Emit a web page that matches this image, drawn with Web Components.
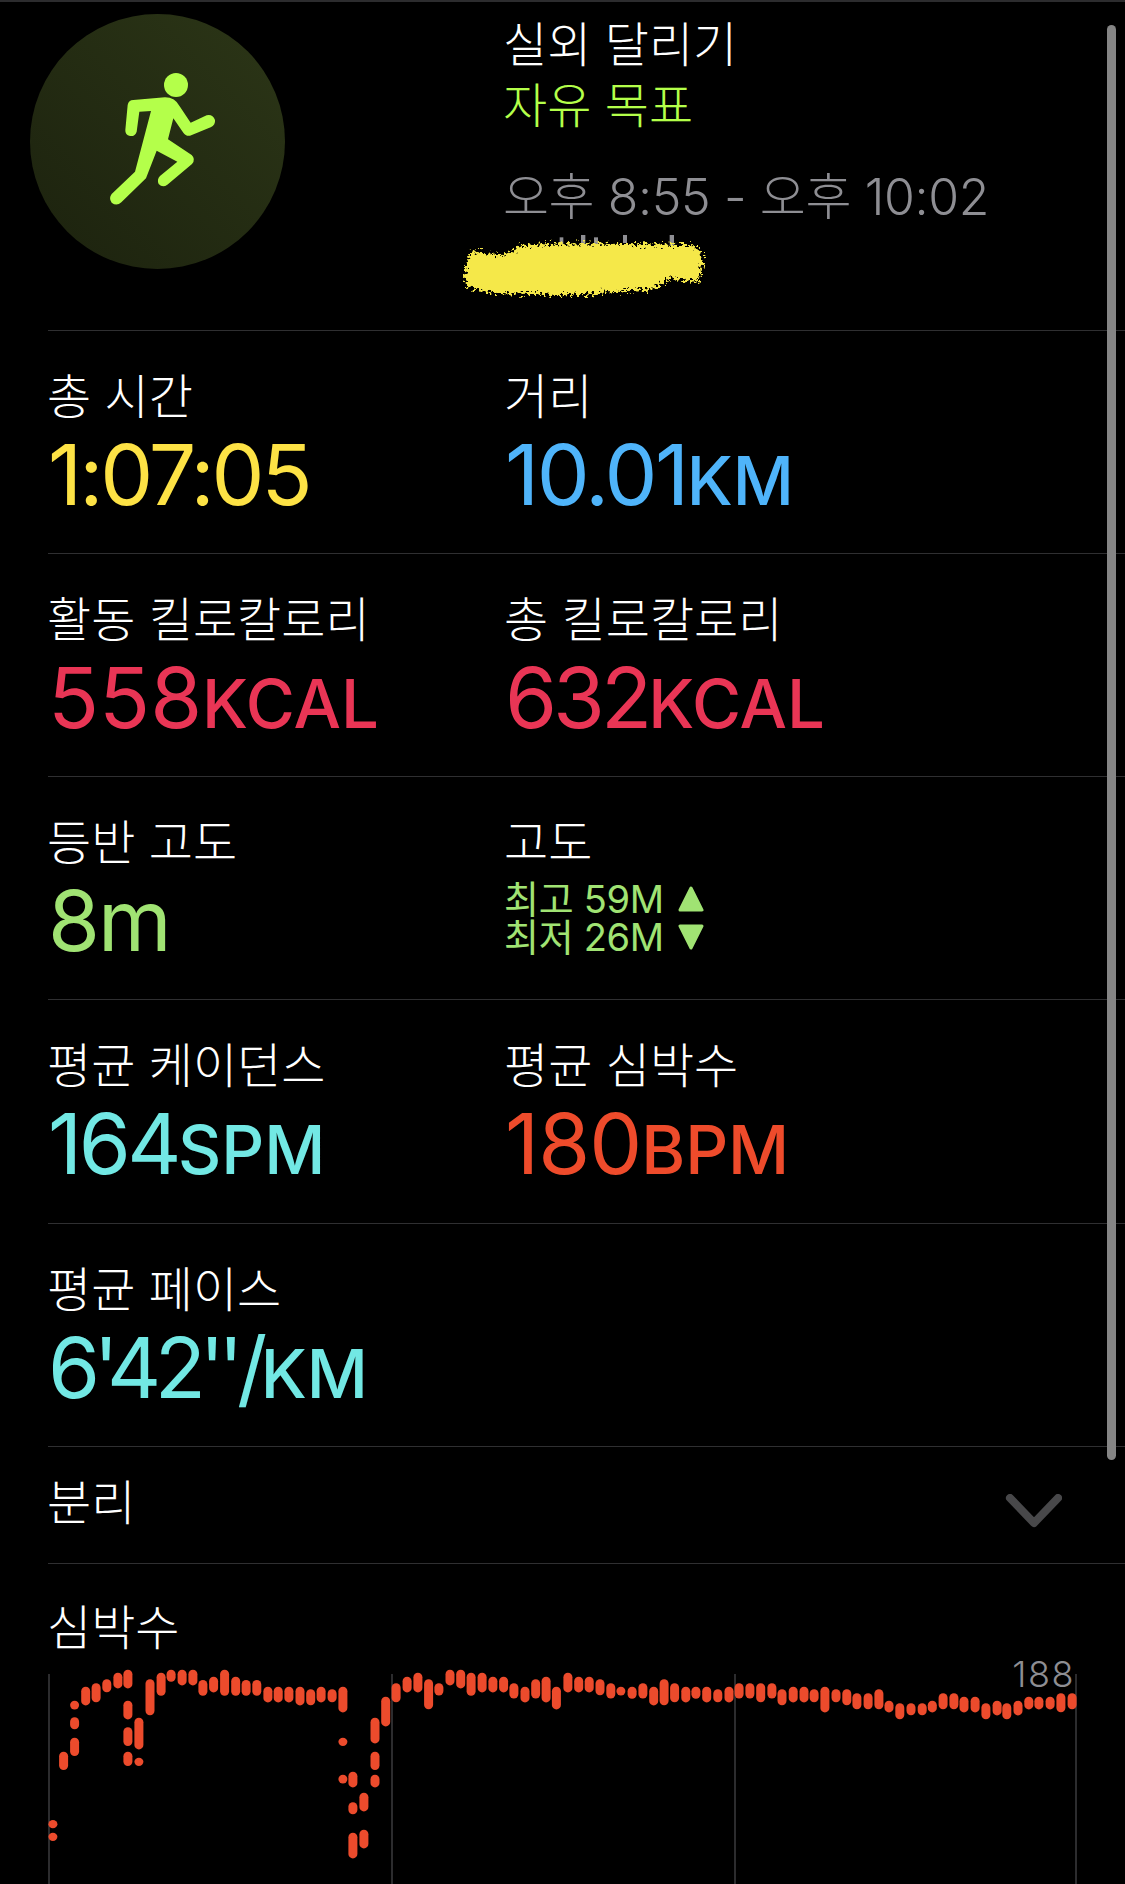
<!DOCTYPE html>
<html lang="ko">
<head>
<meta charset="utf-8">
<title>실외 달리기</title>
<style>
  html, body {
    margin: 0;
    background: #000;
    width: 1125px;
    height: 1884px;
    overflow: hidden;
  }
  body {
    position: relative;
    color: #fff;
    font-family: "Noto Sans CJK KR", sans-serif;
  }
</style>
</head>
<body>
<workout-page>
  <workout-header></workout-header>
  <metric-row>
    <metric-cell label="총 시간" value="1:07:05" track="-3" color="#fde245"></metric-cell>
    <metric-cell label="거리" value="10.01" track="-2.5" unit="KM" color="#4fb4fa"></metric-cell>
  </metric-row>
  <metric-row>
    <metric-cell label="활동 킬로칼로리" value="558" track="0" unit="KCAL" color="#e93555"></metric-cell>
    <metric-cell label="총 킬로칼로리" value="632" track="-4" unit="KCAL" color="#e93555"></metric-cell>
  </metric-row>
  <metric-row>
    <metric-cell label="등반 고도" value="8m" color="#a0e373"></metric-cell>
    <metric-cell label="고도" color="#a0e373">
      <elevation-range high="최고 59M" low="최저 26M"></elevation-range>
    </metric-cell>
  </metric-row>
  <metric-row style="height: 224px">
    <metric-cell label="평균 케이던스" value="164" track="-3.5" unit="SPM" color="#72e8e4"></metric-cell>
    <metric-cell label="평균 심박수" value="180" track="-1" unit="BPM" color="#ee4b2b"></metric-cell>
  </metric-row>
  <metric-row>
    <metric-cell label="평균 페이스" value="6'42''/" track="-6.5" unit="KM" color="#72e8e4"></metric-cell>
  </metric-row>
  <split-row label="분리"></split-row>
  <heart-chart label="심박수" max="188"></heart-chart>
</workout-page>
<scroll-thumb></scroll-thumb>

<script>
const LABEL_FONT = `"Noto Sans CJK KR", sans-serif`;
const VALUE_FONT = `Inter, "Noto Sans CJK KR", sans-serif`;

// Page shell, holds the top hairline
class WorkoutPage extends HTMLElement {
  constructor() {
    super();
    this.attachShadow({ mode: 'open' }).innerHTML = `
      <style>
        :host { display: block; border-top: 2px solid #2c2c2e; }
      </style>
      <slot></slot>`;
  }
}

// Round activity badge, title lines and the scribbled-out location
class WorkoutHeader extends HTMLElement {
  constructor() {
    super();
    this.attachShadow({ mode: 'open' }).innerHTML = `
      <style>
        :host {
          display: flex;
          height: 328px;
          box-sizing: border-box;
          padding: 12px 0 0 30px;
          font-family: ${LABEL_FONT};
        }
        .badge { width: 255px; height: 255px; flex: none; }
        .text {
          margin-left: 218px;
          display: flex;
          flex-direction: column;
          position: relative;
        }
        .title, .goal { font-size: 48px; line-height: 61px; font-weight: 300; white-space: nowrap; }
        .title { color: #fff; margin-top: -3px; }
        .goal { color: #b4ff4a; }
        .time {
          margin-top: 33px;
          font-family: ${VALUE_FONT};
          font-size: 50px;
          line-height: 62px;
          font-weight: 300;
          letter-spacing: -0.4px;
          color: #8e8e93;
          white-space: nowrap;
        }
        .scribble { position: absolute; left: -63px; top: 206px; width: 290px; height: 90px; }
      </style>
      <svg class="badge" viewBox="30 12 765 765">
        <defs>
          <linearGradient id="bg" x1="0" y1="1" x2="1" y2="0">
            <stop offset="0" stop-color="#1c220e"/>
            <stop offset="1" stop-color="#2c3617"/>
          </linearGradient>
        </defs>
        <circle cx="412.5" cy="394.5" r="382.5" fill="url(#bg)"/>
        <circle cx="468" cy="225" r="36" fill="#b4ff4a"/>
        <path fill="#b4ff4a" d="M340 270 L435 262 Q465 262 480 290 L512 338 L560 316 Q578 312 585 330 Q587 345 572 352 L510 377 Q497 379 490 368 L460 325 L444 388 L515 435 Q528 448 516 462 L442 524 Q428 535 416 522 Q410 508 420 498 L472 455 L410 422 L378 505 L304 577 Q290 590 275 578 Q265 565 275 552 L345 485 L393 303 L358 305 L350 365 Q345 380 330 378 Q315 375 316 360 L323 285 Q326 270 340 270 Z"/>
      </svg>
      <div class="text">
        <div class="title">실외 달리기</div>
        <div class="goal">자유 목표</div>
        <div class="time">오후 8:55 - 오후 10:02</div>
        <svg class="scribble" viewBox="0 0 870 270">
          <defs>
            <filter id="rough" x="-5%" y="-15%" width="110%" height="130%">
              <feTurbulence type="fractalNoise" baseFrequency="0.11" numOctaves="3" seed="4"/>
              <feDisplacementMap in="SourceGraphic" scale="46" xChannelSelector="R" yChannelSelector="G"/>
              <feGaussianBlur stdDeviation="2"/>
            </filter>
          </defs>
          <g fill="#8e8e93">
            <rect x="359" y="52" width="11" height="20"/>
            <rect x="423" y="45" width="13" height="28"/>
            <rect x="462" y="52" width="12" height="20"/>
            <rect x="549" y="45" width="12" height="24"/>
            <rect x="689" y="45" width="13" height="32"/>
          </g>
          <path filter="url(#rough)" fill="#f5e84a" d="M72 170 L92 92 L190 108 L240 78 L360 70 L560 72 L772 76 L788 115 L778 185 L690 175 L640 208 L380 226 L150 218 L82 198 Z"/>
        </svg>
      </div>`;
  }
}

// One divided row of the summary, two columns
class MetricRow extends HTMLElement {
  constructor() {
    super();
    this.attachShadow({ mode: 'open' }).innerHTML = `
      <style>
        :host {
          display: grid;
          grid-template-columns: 457px 1fr;
          height: 223px;
          box-sizing: border-box;
          margin-left: 48px;
          border-top: 1px solid #2f2f31;
        }
      </style>
      <slot></slot>`;
  }
}

class MetricCell extends HTMLElement {
  constructor() {
    super();
    this.attachShadow({ mode: 'open' });
  }

  connectedCallback() {
    const label = this.getAttribute('label') || '';
    const value = this.getAttribute('value') || '';
    const unit = this.getAttribute('unit') || '';
    const color = this.getAttribute('color') || '#fff';
    // digit widths differ from the original face, so each value gets its own tracking
    const track = this.getAttribute('track') || '-2';
    this.shadowRoot.innerHTML = `
      <style>
        :host { display: block; padding-top: 31px; color: ${color}; }
        .label {
          font-family: ${LABEL_FONT};
          font-size: 48px;
          line-height: 62px;
          font-weight: 300;
          margin-left: -1px;
          color: #fff;
          white-space: nowrap;
        }
        .value {
          margin-top: 5px;
          font-family: ${VALUE_FONT};
          font-size: 84px;
          line-height: 92px;
          font-weight: 400;
          letter-spacing: ${track}px;
          white-space: nowrap;
        }
        .unit { font-size: 67px; font-weight: 500; letter-spacing: 0; }
      </style>
      <div class="label">${label}</div>
      <slot><div class="value">${value}<span class="unit">${unit}</span></div></slot>`;
  }
}

class ElevationRange extends HTMLElement {
  constructor() {
    super();
    this.attachShadow({ mode: 'open' });
  }

  connectedCallback() {
    this.shadowRoot.innerHTML = `
      <style>
        :host {
          display: grid;
          grid-template-columns: max-content max-content;
          column-gap: 14px;
          align-items: center;
          margin: 10px 0 0 -1px;
          font-family: ${VALUE_FONT};
          font-size: 38px;
          line-height: 38px;
          letter-spacing: -0.3px;
        }
        svg { width: 26px; height: 26px; display: block; }
      </style>
      <span>${this.getAttribute('high')}</span>
      <svg viewBox="0 0 26 26"><path fill="currentColor" stroke="currentColor" stroke-width="3" stroke-linejoin="round" d="M13 2 L24 24 L2 24 Z"/></svg>
      <span>${this.getAttribute('low')}</span>
      <svg viewBox="0 0 26 26"><path fill="currentColor" stroke="currentColor" stroke-width="3" stroke-linejoin="round" d="M2 2 L24 2 L13 24 Z"/></svg>`;
  }
}

class SplitRow extends HTMLElement {
  constructor() {
    super();
    this.attachShadow({ mode: 'open' });
  }

  connectedCallback() {
    this.shadowRoot.innerHTML = `
      <style>
        :host {
          display: flex;
          align-items: center;
          justify-content: space-between;
          height: 117px;
          box-sizing: border-box;
          margin-left: 48px;
          padding-right: 63px;
          border-top: 1px solid #2f2f31;
          font-family: ${LABEL_FONT};
          font-size: 48px;
          font-weight: 300;
          color: #fff;
        }
        span { margin: -12px 0 0 -1px; }
        svg { width: 58px; height: 34px; display: block; margin-top: 12px; }
      </style>
      <span>${this.getAttribute('label')}</span>
      <svg viewBox="0 0 58 34"><path d="M6 4 L30 29 L54 4" fill="none" stroke="#48484a" stroke-width="8" stroke-linecap="round" stroke-linejoin="round"/></svg>`;
  }
}

// bars read from the reference: [x, top, bottom, ...] per column, y relative to the 1600 line x3
const LEFT_BARS = [
  [148,660,685,698,723],[178,455,510],[209,302,328,352,388,413,468],[240,260,316],[269,250,307],
  [299,238,277],[330,218,265],[358,209,265,302,358,382,438,455,498],[389,353,448,473,498],[420,238,346],
  [451,218,287],[479,209,245],[510,209,256],[540,209,256],[568,240,287],[598,230,277],[629,209,287],
  [660,230,287],[689,240,287],[719,240,287],[750,260,307],[779,260,307],[809,260,307],[840,260,316],
  [870,268,316],[899,260,307],[930,268,307],[960,260,337,413,438,524,550],[988,515,562,607,643,698,775],
  [1019,578,634,689,745],[1050,353,430,455,510,524,562],[1080,290,379],[1109,250,307],[1140,230,277],
  [1170,218,277],[1200,238,328],[1229,250,287],[1260,209,256],[1290,209,265],[1319,218,287],[1350,218,277],
  [1380,230,277],[1410,230,277],[1439,250,296],[1470,260,307],[1500,238,296],[1529,230,307],[1558,260,328]
];
const RIGHT_BARS = [
  [22,218,277],[52,230,277],[81,230,277],[111,238,286],[141,250,296],[169,260,286],[200,260,296],[230,250,296],
  [260,260,316],[289,238,316],[318,250,307],[349,260,307],[377,260,296],[407,260,307],[438,268,307],[469,260,307],
  [497,250,296],[527,250,296],[557,250,307],[588,250,296],[616,268,316],[647,260,307],[677,260,307],[705,268,307],
  [735,260,337],[766,268,307],[796,268,316],[824,280,328],[855,280,328],[885,268,328],[913,302,337],[943,310,358],
  [974,310,346],[1005,310,346],[1033,302,337],[1063,280,328],[1093,280,328],[1121,290,337],[1152,290,337],
  [1182,310,358],[1213,302,346],[1240,310,358],[1271,302,346],[1301,290,328],[1329,290,328],[1360,290,328],
  [1390,280,337],[1421,280,328]
];

class HeartChart extends HTMLElement {
  constructor() {
    super();
    this.attachShadow({ mode: 'open' });
  }

  connectedCallback() {
    const bar = (x, list) => {
      let out = '';
      for (let i = 0; i < list.length; i += 2) {
        const top = list[i] / 3;
        const h = (list[i + 1] - list[i]) / 3;
        out += `<rect x="${(x - 4.5).toFixed(1)}" y="${top.toFixed(1)}" width="9" height="${h.toFixed(1)}" rx="4.5"/>`;
      }
      return out;
    };
    let bars = '';
    LEFT_BARS.forEach(([x, ...list]) => { bars += bar(x / 2.8, list); });
    RIGHT_BARS.forEach(([x, ...list]) => { bars += bar(560 + x / 2.775, list); });
    const grid = [49, 392, 735, 1076].map(x => `<rect x="${x - 1}" y="74" width="2" height="210"/>`).join('');

    this.shadowRoot.innerHTML = `
      <style>
        :host {
          display: block;
          position: relative;
          height: 321px;
          border-top: 1px solid #2f2f31;
          font-family: ${LABEL_FONT};
        }
        :host::before { content: ""; position: absolute; left: 0; top: -1px; width: 48px; height: 1px; background: #000; }
        .label {
          padding: 29px 0 0 47px;
          font-size: 48px;
          line-height: 62px;
          font-weight: 300;
          color: #fff;
        }
        .max {
          position: absolute;
          right: 50px;
          top: 90px;
          font-family: ${VALUE_FONT};
          font-size: 36px;
          line-height: 40px;
          font-weight: 300;
          letter-spacing: 1.5px;
          color: #8e8e93;
        }
        svg { position: absolute; left: 0; top: 36px; width: 1125px; height: 284px; }
      </style>
      <div class="label">${this.getAttribute('label')}</div>
      <svg viewBox="0 0 1125 284">
        <g fill="#2c2c2e">${grid}</g>
        <g fill="#ec4b2c">${bars}</g>
      </svg>
      <div class="max">${this.getAttribute('max')}</div>`;
  }
}

// Overlay scroll indicator, sits over the rows
class ScrollThumb extends HTMLElement {
  constructor() {
    super();
    this.attachShadow({ mode: 'open' }).innerHTML = `
      <style>
        :host {
          position: absolute;
          left: 1107px;
          top: 25px;
          width: 9px;
          height: 1435px;
          border-radius: 4.5px;
          background: #858585;
        }
      </style>`;
  }
}

customElements.define('workout-page', WorkoutPage);
customElements.define('workout-header', WorkoutHeader);
customElements.define('metric-row', MetricRow);
customElements.define('metric-cell', MetricCell);
customElements.define('elevation-range', ElevationRange);
customElements.define('split-row', SplitRow);
customElements.define('heart-chart', HeartChart);
customElements.define('scroll-thumb', ScrollThumb);
</script>
</body>
</html>
